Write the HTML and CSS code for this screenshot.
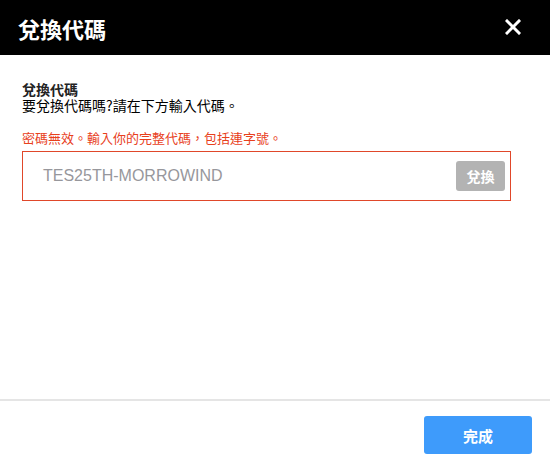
FILE: index.html
```html
<!DOCTYPE html>
<html lang="zh-Hant">
<head>
<meta charset="utf-8">
<title>兌換代碼</title>
<link rel="stylesheet" href="styles.css">
</head>
<body>
<div class="dialog">
  <header class="dlg-header">
    <h1 class="dlg-title">兌換代碼</h1>
    <button class="close-btn" aria-label="關閉">
      <svg width="16" height="16" viewBox="0 0 16 16"><path d="M2 2 L14 14 M14 2 L2 14" stroke="#fff" stroke-width="3" stroke-linecap="square" fill="none"/></svg>
    </button>
  </header>
  <main class="dlg-body">
    <div class="sec-title">兌換代碼</div>
    <div class="sec-desc">要兌換代碼嗎?請在下方輸入代碼。</div>
    <div class="error-msg">密碼無效。輸入你的完整代碼，包括連字號。</div>
    <div class="code-box">
      <span class="code-placeholder">TES25TH-MORROWIND</span>
      <button class="redeem-btn">兌換</button>
    </div>
  </main>
  <footer class="dlg-footer">
    <button class="done-btn">完成</button>
  </footer>
</div>
</body>
</html>
```
FILE: styles.css
```css
html, body {
  margin: 0;
  padding: 0;
  background: #fff;
}
body {
  font-family: "Noto Sans CJK TC", "Noto Sans", sans-serif;
  color: #000;
}
.dialog {
  height: 465px;
  display: flex;
  flex-direction: column;
}
.dlg-header {
  height: 55px;
  flex: none;
  background: #000;
  display: flex;
  align-items: center;
  justify-content: space-between;
  padding: 0 29px 0 18px;
}
.dlg-title {
  margin: 0;
  font-size: 22px;
  line-height: 26px;
  font-weight: 700;
  color: #fff;
}
.close-btn {
  border: 0;
  background: none;
  padding: 0;
  width: 16px;
  height: 16px;
  display: block;
  margin-top: -2px;
}
.close-btn svg { display: block; }
.dlg-body {
  flex: 1;
  padding: 26px 39px 0 22px;
}
.sec-title {
  font-size: 14px;
  line-height: 16px;
  font-weight: 700;
  color: #222;
}
.sec-desc {
  font-size: 14px;
  line-height: 16px;
}
.error-msg {
  margin-top: 17px;
  font-size: 13px;
  line-height: 16px;
  color: #e8401c;
}
.code-box {
  margin-top: 5px;
  height: 50px;
  box-sizing: border-box;
  border: 1px solid #e0472a;
  display: flex;
  align-items: center;
  justify-content: space-between;
  padding: 0 5px 0 20px;
}
.code-placeholder {
  font-family: "Liberation Sans", Arial, sans-serif;
  font-size: 16px;
  color: #97979c;
}
.redeem-btn {
  width: 49px;
  height: 30px;
  border: 0;
  border-radius: 3px;
  background: #b3b3b3;
  color: #fff;
  font-family: "Noto Sans CJK TC", sans-serif;
  font-size: 14px;
  font-weight: 700;
  padding: 0;
}
.dlg-footer {
  flex: none;
  border-top: 2px solid #e5e5e5;
  padding: 15px 18px 11px;
  display: flex;
  justify-content: flex-end;
}
.done-btn {
  width: 108px;
  height: 38px;
  border: 0;
  border-radius: 3px;
  background: #3e9bfb;
  color: #fff;
  font-family: "Noto Sans CJK TC", sans-serif;
  font-size: 15px;
  font-weight: 700;
  padding: 0;
}
```
